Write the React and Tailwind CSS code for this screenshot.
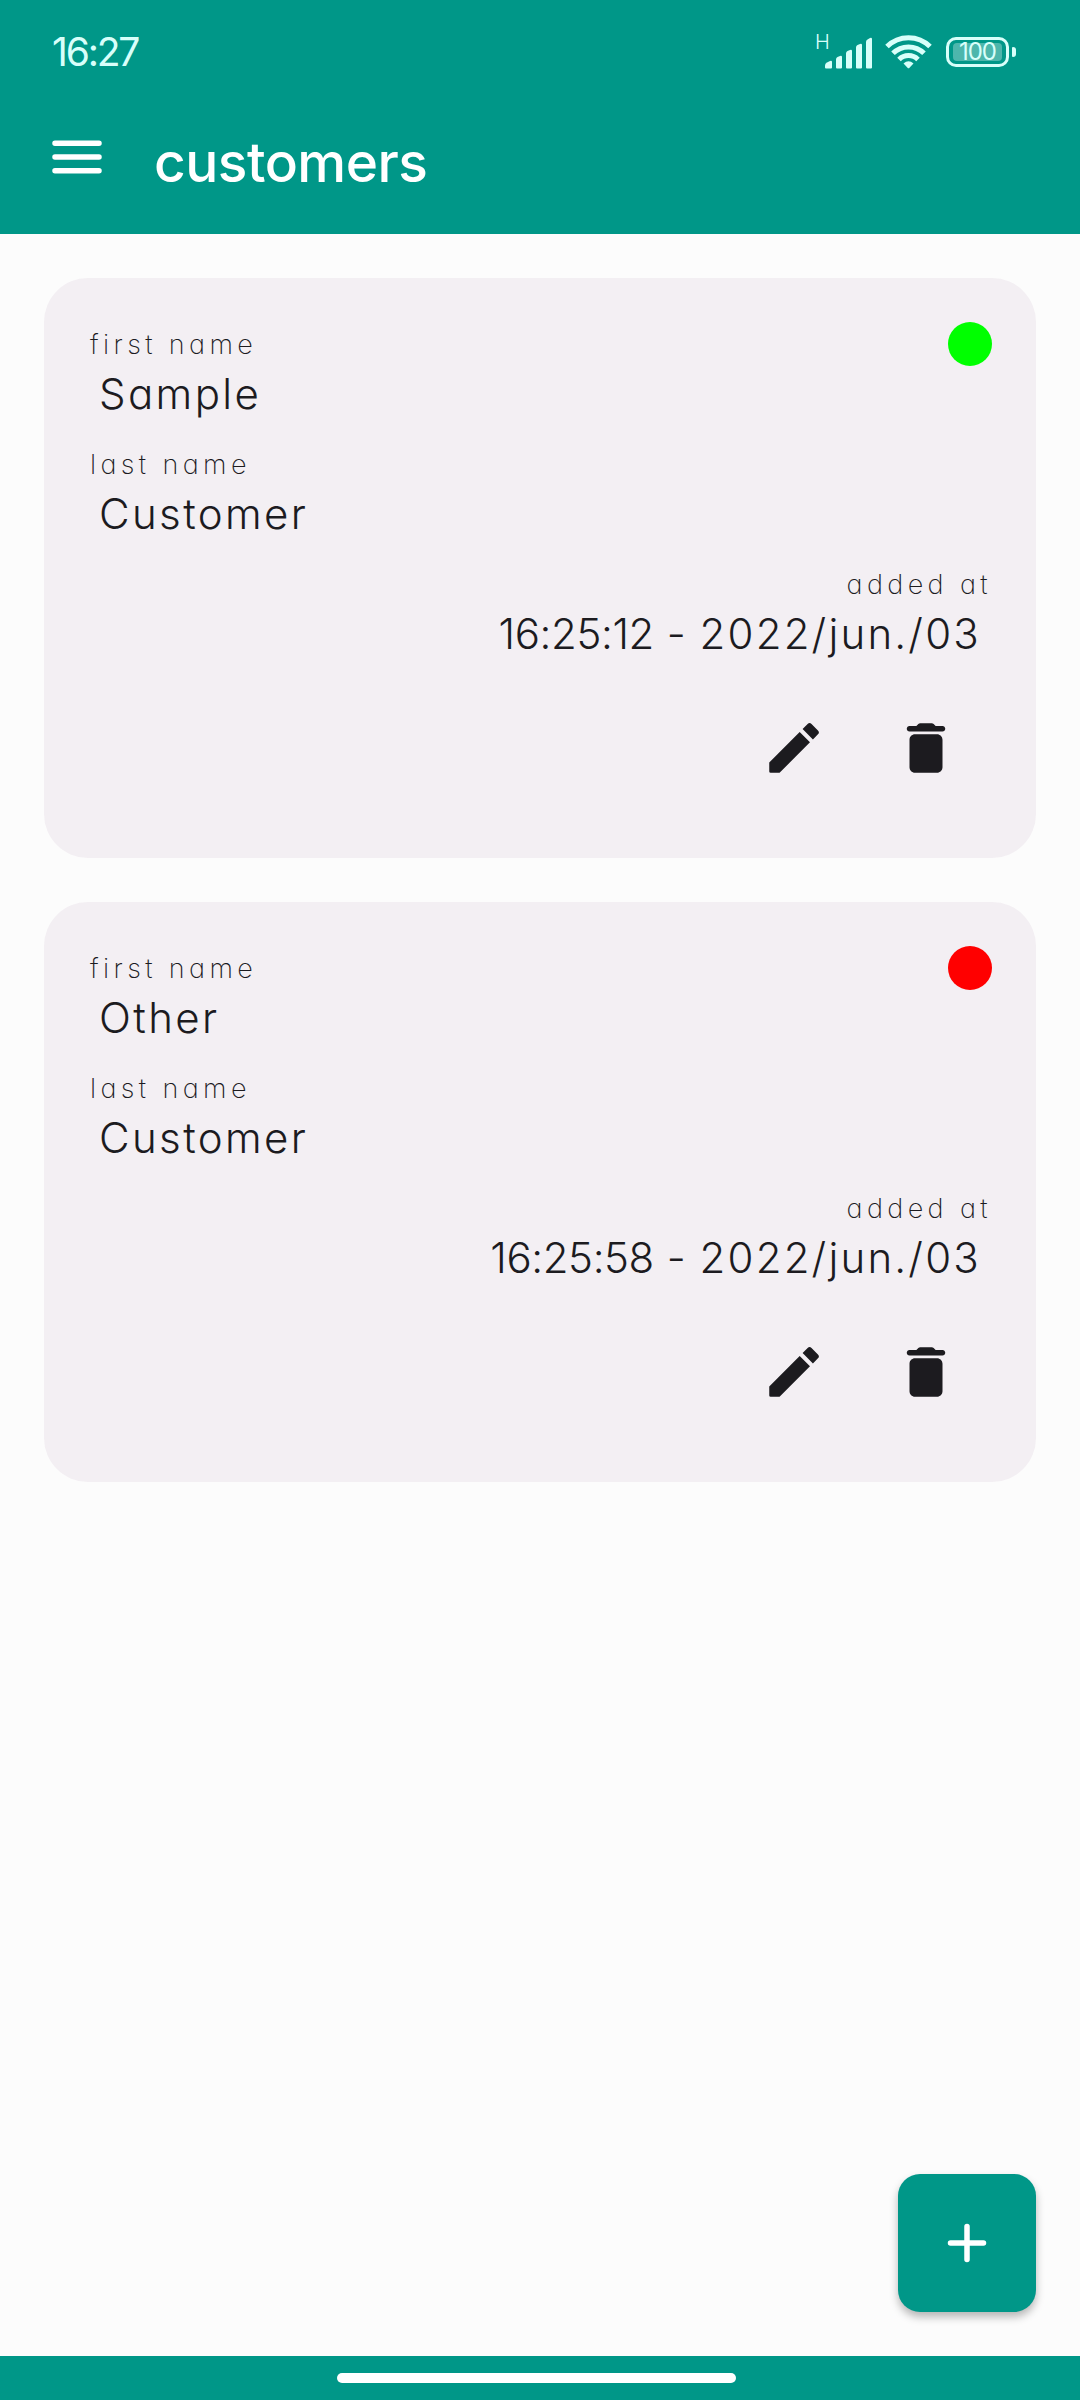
const customers = [
  { id: 1, firstName: 'Sample', lastName: 'Customer', time: '16:25:12', date: '2022/jun./03', active: true },
  { id: 2, firstName: 'Other', lastName: 'Customer', time: '16:25:58', date: '2022/jun./03', active: false },
];

function SignalIcon() {
  return (
    <svg className="h-[36px] w-[58px]" viewBox="0 0 58 36" fill="currentColor">
      <path d="M8 31.5q0-2 2-3l3-1.5q2-.6 2 1v5.5q0 1-1 1h-5q-1 0-1-1z" />
      <path d="M19 25.5q0-2 1.500-2.600l2.500-1q2-.6 2 1v10.600q0 1-1 1h-4q-1 0-1-1z" />
      <path d="M29 19.500q0-2 1.500-2.600l2.500-1q2-.6 2 1v16.600q0 1-1 1h-4q-1 0-1-1z" />
      <path d="M39 13.500q0-2 1.500-2.600l2.500-1q2-.6 2 1v22.600q0 1-1 1h-4q-1 0-1-1z" />
      <path d="M49 8q0-2 1.500-2.600l2.500-1.500q2-.6 2 1v28.600q0 1-1 1h-4q-1 0-1-1z" />
    </svg>
  );
}

function WifiIcon() {
  return (
    <svg className="h-[34px] w-[47px]" viewBox="0 0 47 34" fill="none" stroke="currentColor" strokeWidth="5">
      <path d="M2 11.500a30.500 30.500 0 0 1 43 0" />
      <path d="M8 18.300a22 22 0 0 1 31 0" />
      <path d="M14 24.500a13.500 13.500 0 0 1 19 0" />
      <path d="M18.500 28.500q5-4.500 10 0l-4 4.200q-1 1-2 0z" fill="currentColor" stroke="none" />
    </svg>
  );
}

function StatusBar() {
  return (
    <div className="flex h-[100px] items-start justify-between pl-[52px] pr-[64px] pt-[31px] text-[#d8fffa]">
      <span className="text-[39px] leading-[42px] tracking-[-2.2px]">16:27</span>
      <div className="flex items-start">
        <div className="relative mr-[10px] pl-[2px] pt-[3px]">
          <span className="absolute left-0 top-[1px] text-[20px] font-light leading-5">H</span>
          <SignalIcon />
        </div>
        <div className="mr-[14px] pt-[4px]">
          <WifiIcon />
        </div>
        <div className="flex items-center gap-[3px] pt-[6px]">
          <div className="flex h-[30px] w-[63px] items-center justify-center rounded-[10px] border-[3px] border-current">
            <span className="flex h-[18px] w-[49px] items-center justify-center rounded-[4px] bg-white/30 text-[24px] leading-[18px] tracking-[-1px]">
              100
            </span>
          </div>
          <div className="h-[10px] w-[4px] rounded-r-[3px] rounded-l-[1px] bg-current" />
        </div>
      </div>
    </div>
  );
}

function MenuIcon() {
  return (
    <svg className="size-[66px]" viewBox="0 0 24 24" fill="none" stroke="currentColor" strokeWidth="2" strokeLinecap="round">
      <path d="M4 7h16M4 12h16M4 17h16" />
    </svg>
  );
}

function EditIcon() {
  return (
    <svg className="size-[66px]" viewBox="0 0 24 24" fill="currentColor">
      <path d="M3 17.250V20.500q0 .5.500.5H6.750L17.810 9.940l-3.750-3.750zM20.710 7.040a1 1 0 0 0 0-1.410l-2.340-2.340a1 1 0 0 0-1.410 0l-1.830 1.830 3.750 3.750z" />
    </svg>
  );
}

function DeleteIcon() {
  return (
    <svg className="size-[66px]" viewBox="0 0 24 24" fill="currentColor">
      <path d="M6 19c0 1.100.9 2 2 2h8c1.100 0 2-.9 2-2V9c0-1.100-.9-2-2-2H8c-1.100 0-2 .9-2 2zM18 4h-2.500l-.71-.71c-.18-.18-.44-.29-.7-.29H9.910c-.26 0-.52.11-.7.29L8.500 4H6c-.55 0-1 .45-1 1s.45 1 1 1h12c.55 0 1-.45 1-1s-.45-1-1-1z" />
    </svg>
  );
}

function Field({ label, children }) {
  return (
    <div>
      <p className="text-[27px] font-extralight leading-[50px] tracking-[4.4px] text-[#1c1b1f]">{label}</p>
      <p className="-mt-px mb-px px-[9px] text-[42px] font-light leading-[50px] tracking-[2.4px] text-[#1c1b1f]">{children}</p>
    </div>
  );
}

function CustomerCard({ customer }) {
  return (
    <div className="relative h-[580px] rounded-[44px] bg-[#f3eff3] pl-[46px] pr-[44px] pt-[42px]">
      <span
        className={
          customer.active
            ? 'absolute right-[44px] top-[44px] size-[44px] rounded-full bg-[#00ff00]'
            : 'absolute right-[44px] top-[44px] size-[44px] rounded-full bg-[#ff0000]'
        }
      />
      <div className="flex flex-col gap-5">
        <Field label="first name">{customer.firstName}</Field>
        <Field label="last name">{customer.lastName}</Field>
        <div className="text-right">
          <Field label="added at">
            <span className="tracking-[-0.4px]">{customer.time}</span>
            <span className="tracking-[1px]"> - </span>
            <span className="mr-[2px] tracking-[2.2px]">{customer.date}</span>
          </Field>
        </div>
      </div>
      <div className="mt-[22px] flex justify-end text-[#1c1b1f]">
        <button className="flex size-[132px] items-center justify-center" aria-label="edit">
          <EditIcon />
        </button>
        <button className="flex size-[132px] items-center justify-center" aria-label="delete">
          <DeleteIcon />
        </button>
      </div>
    </div>
  );
}

export default function App() {
  return (
    <div className="relative flex h-[2400px] w-[1080px] flex-col bg-[#fcfcfc] font-['Inter',sans-serif] [font-feature-settings:'cv11','ss03']">
      <header className="h-[234px] bg-[#009788]">
        <StatusBar />
        <div className="flex items-start pl-[44px] pt-[24px] text-white">
          <MenuIcon />
          <h1 className="ml-[44px] mt-[2px] text-[55px] font-medium leading-[72px] tracking-[-0.5px]">customers</h1>
        </div>
      </header>

      <main className="flex flex-1 flex-col gap-[44px] px-[44px] pt-[44px]">
        {customers.map((customer) => (
          <CustomerCard key={customer.id} customer={customer} />
        ))}
      </main>

      {/* Add customer button */}
      <button
        className="absolute bottom-[88px] right-[44px] flex size-[138px] items-center justify-center rounded-[22px] bg-[#009788] text-white shadow-[0_5px_8px_rgba(0,0,0,0.28)]"
        aria-label="add"
      >
        <svg className="size-[66px]" viewBox="0 0 24 24" fill="none" stroke="currentColor" strokeWidth="2" strokeLinecap="round">
          <path d="M6 12h12M12 6v12" />
        </svg>
      </button>

      {/* Gesture bar */}
      <footer className="flex h-[44px] items-center justify-center bg-[#009788] pr-[7px]">
        <div className="h-[10px] w-[399px] rounded-full bg-white" />
      </footer>
    </div>
  );
}
